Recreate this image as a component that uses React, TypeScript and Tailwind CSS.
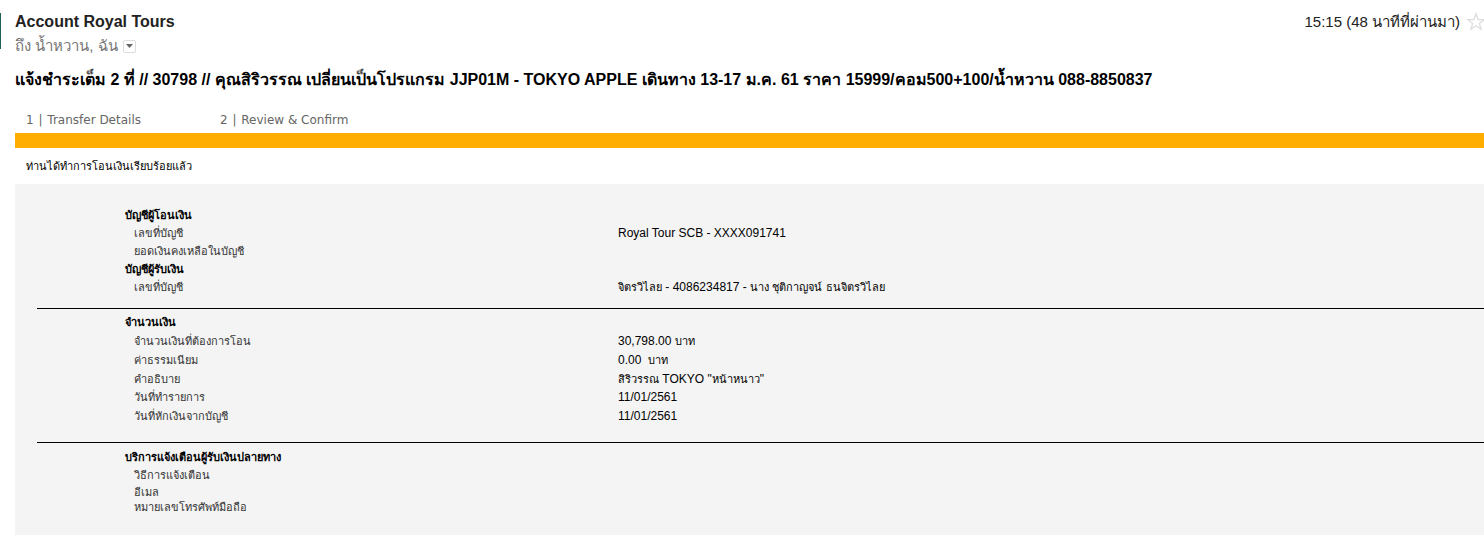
type Row = { label: string; value?: string; height?: string };
type Group = { title: string; rows: Row[] };

const accounts: Group[] = [
  {
    title: "บัญชีผู้โอนเงิน",
    rows: [
      { label: "เลขที่บัญชี", value: "Royal Tour SCB - XXXX091741" },
      { label: "ยอดเงินคงเหลือในบัญชี" },
    ],
  },
  {
    title: "บัญชีผู้รับเงิน",
    rows: [{ label: "เลขที่บัญชี", value: "จิตรวิไลย - 4086234817 - นาง ชุติกาญจน์ ธนจิตรวิไลย" }],
  },
];

const amounts: Group[] = [
  {
    title: "จำนวนเงิน",
    rows: [
      { label: "จำนวนเงินที่ต้องการโอน", value: "30,798.00 บาท" },
      { label: "ค่าธรรมเนียม", value: "0.00  บาท" },
      { label: "คำอธิบาย", value: 'สิริวรรณ TOKYO "หน้าหนาว"' },
      { label: "วันที่ทำรายการ", value: "11/01/2561", height: "h-[18px]" },
      { label: "วันที่หักเงินจากบัญชี", value: "11/01/2561" },
    ],
  },
];

const notices: Group[] = [
  {
    title: "บริการแจ้งเตือนผู้รับเงินปลายทาง",
    rows: [
      { label: "วิธีการแจ้งเตือน" },
      { label: "อีเมล", height: "h-4" },
      { label: "หมายเลขโทรศัพท์มือถือ", height: "h-[14px]" },
    ],
  },
];

// Thai runs are set one size below the Latin text and digits around them.
function MixedText({ text }: { text: string }) {
  return text.split(/([\u0E00-\u0E7F]+)/).map((part, i) =>
    i % 2 === 1 ? (
      <span key={i} className="text-[11px]">
        {part}
      </span>
    ) : (
      part
    ),
  );
}

function Section({ groups, rowHeight }: { groups: Group[]; rowHeight: string }) {
  return (
    <table className="w-full table-fixed border-collapse text-left">
      <colgroup>
        <col className="w-[581px]" />
        <col />
      </colgroup>
      {groups.map((group) => (
        <tbody key={group.title}>
          <tr className={rowHeight}>
            <th colSpan={2} className="p-0 pl-[88px] text-[11px] leading-3 font-bold text-black">
              {group.title}
            </th>
          </tr>
          {group.rows.map((row) => (
            <tr key={row.label} className={row.height ?? rowHeight}>
              <th className="p-0 pl-[97px] text-[11px] leading-3 font-normal text-[#333]">{row.label}</th>
              <td className="p-0 text-[12px] leading-3 whitespace-pre text-black">
                {row.value && <MixedText text={row.value} />}
              </td>
            </tr>
          ))}
        </tbody>
      ))}
    </table>
  );
}

export default function App() {
  return (
    <div className="flex overflow-hidden bg-white font-['Liberation_Sans',sans-serif]">
      <div className="mt-[13px] h-9 w-px shrink-0 bg-[#1f5f58]" />
      <main className="min-w-0 grow pt-3 pl-[14px]">
        <header className="flex items-start justify-between">
          <div>
            <h1 className="text-[16px] leading-5 font-bold text-[#222]">Account Royal Tours</h1>
            <div className="mt-1 flex items-center gap-[5px] text-[15px] leading-5 text-[#777]">
              <span>ถึง น้ำหวาน, ฉัน</span>
              <button
                type="button"
                aria-label="แสดงรายละเอียด"
                className="flex size-[13px] items-center justify-center rounded-[2px] border border-[#ddd]"
              >
                <svg width="7" height="4" viewBox="0 0 7 4" fill="#666">
                  <path d="M0 0h7L3.5 4z" />
                </svg>
              </button>
            </div>
          </div>
          <div className="-mr-[2px] flex items-center gap-[6px] text-[15px] leading-5 text-[#222]">
            <time>15:15 (48 นาทีที่ผ่านมา)</time>
            <button type="button" aria-label="ติดดาว">
              <svg width="20" height="20" viewBox="0 0 20 20" fill="none" stroke="#ddd" strokeWidth="1.3">
                <path d="M10 1.8l2.1 5.7 6 .2-4.7 3.7 1.7 5.8-5.1-3.4-5.1 3.4 1.7-5.8L1.9 7.7l6-.2z" />
              </svg>
            </button>
          </div>
        </header>

        <h2 className="mt-[14px] text-[16px] leading-5 font-bold whitespace-nowrap text-black">
          แจ้งชำระเต็ม 2 ที่ // 30798 // คุณสิริวรรณ เปลี่ยนเป็นโปรแกรม JJP01M - TOKYO APPLE เดินทาง 13-17 ม.ค. 61
          ราคา 15999/คอม500+100/น้ำหวาน 088-8850837
        </h2>

        <ol className="mt-5 flex pl-[11px] font-['DejaVu_Sans',sans-serif] text-[12px] leading-5 text-[#666]">
          <li className="w-[194px]">
            1 <span className="px-px">|</span> Transfer Details
          </li>
          <li>
            2 <span className="px-px">|</span> Review &amp; Confirm
          </li>
        </ol>
        <div className="mt-[3px] h-[15px] bg-[#ffae00]" />
        <p className="py-2 pl-[11px] text-[11px] leading-5 text-black">ท่านได้ทำการโอนเงินเรียบร้อยแล้ว</p>

        <section className="bg-[#f4f4f4] pt-[22px] pb-[21px] pl-[22px]">
          <div className="pb-3">
            <Section groups={accounts} rowHeight="h-[18px]" />
          </div>
          <div className="border-t border-black pt-[3px] pb-[17px]">
            <Section groups={amounts} rowHeight="h-[19px]" />
          </div>
          <div className="border-t border-black pt-[5px]">
            <Section groups={notices} rowHeight="h-[18px]" />
          </div>
        </section>
      </main>
    </div>
  );
}
